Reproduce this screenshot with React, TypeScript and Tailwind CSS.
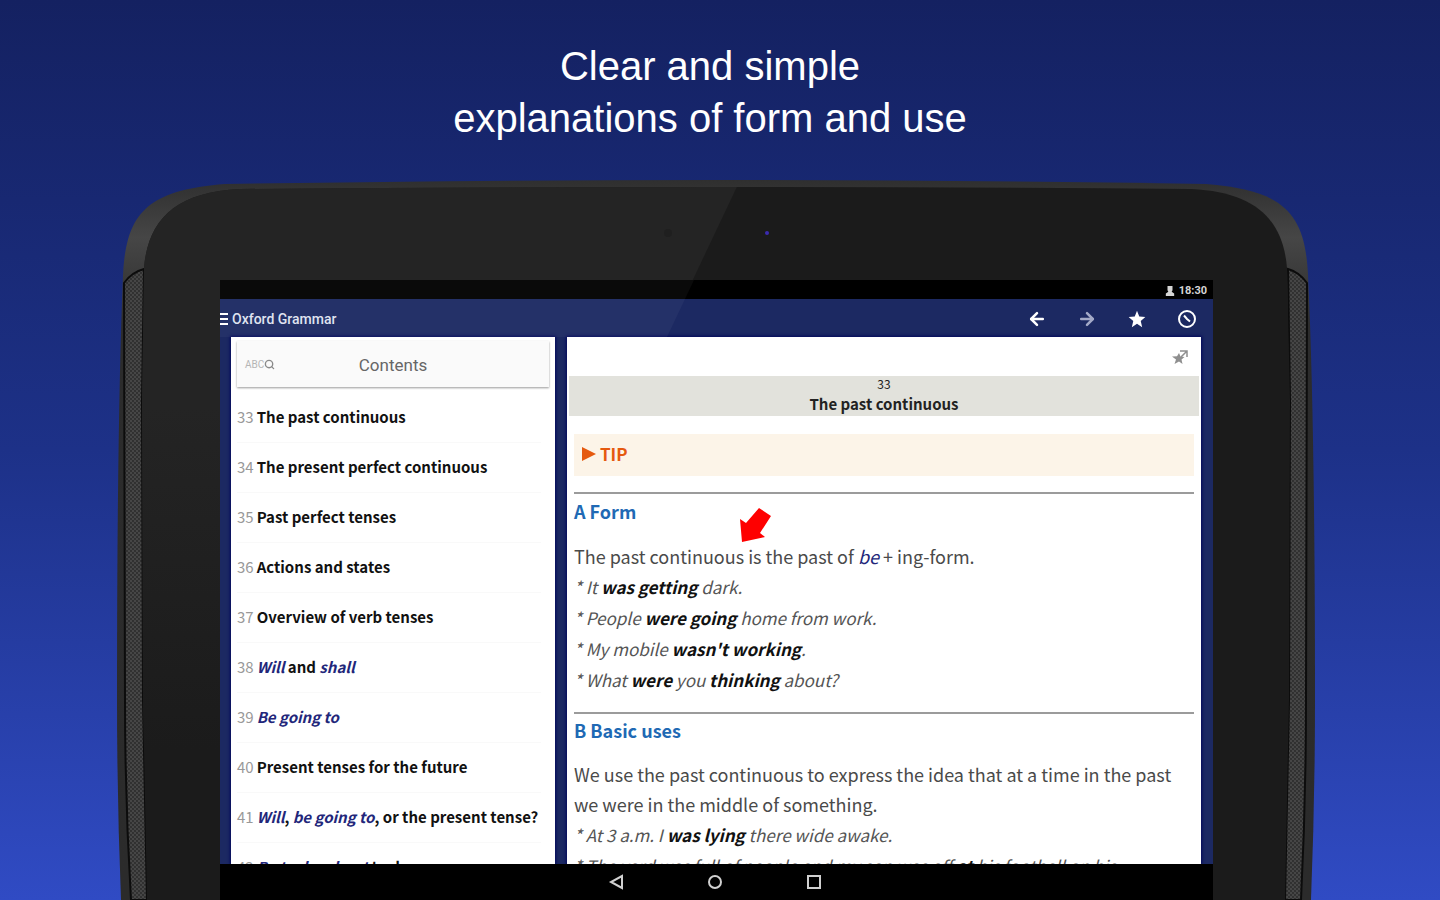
import { ReactNode } from "react";
import { ArrowLeft, ArrowRight, Search } from "lucide-react";

const Term = ({ children }: { children: ReactNode }) => (
  <em className="text-[#22267a]">{children}</em>
);

const units: { no: number; title: ReactNode }[] = [
  { no: 33, title: "The past continuous" },
  { no: 34, title: "The present perfect continuous" },
  { no: 35, title: "Past perfect tenses" },
  { no: 36, title: "Actions and states" },
  { no: 37, title: "Overview of verb tenses" },
  { no: 38, title: <><Term>Will</Term> and <Term>shall</Term></> },
  { no: 39, title: <Term>Be going to</Term> },
  { no: 40, title: "Present tenses for the future" },
  { no: 41, title: <><Term>Will</Term>, <Term>be going to</Term>, or the present tense?</> },
  { no: 42, title: <><Term>Be to, be about</Term> to do</> },
];

function TabletFrame() {
  return (
    <svg
      className="absolute inset-0 w-full h-full"
      viewBox="116 178 1200 722"
      preserveAspectRatio="none"
      aria-hidden="true"
    >
      <defs>
        <linearGradient id="rim" x1="0" y1="0" x2="0" y2="1">
          <stop offset="0" stopColor="#2f2f2f" />
          <stop offset="0.08" stopColor="#464646" />
          <stop offset="0.2" stopColor="#2c2c2c" />
          <stop offset="1" stopColor="#2b2b2b" />
        </linearGradient>
        <linearGradient id="gloss" x1="0" y1="0" x2="0" y2="1">
          <stop offset="0.4" stopColor="#242424" />
          <stop offset="1" stopColor="#1b1b1b" />
        </linearGradient>
        <pattern id="mesh" width="4" height="4" patternUnits="userSpaceOnUse">
          <rect width="4" height="4" fill="#464646" />
          <circle cx="1" cy="1" r="0.9" fill="#262626" />
          <circle cx="3" cy="3" r="0.9" fill="#262626" />
        </pattern>
        <clipPath id="face">
          <path d="M147 900 L143 700 L142 400 L144 268 C148 220 175 192 240 189 Q480 187 716 187 T1191 189 C1256 192 1283 220 1287 268 L1290 400 L1289 700 L1285 900Z" />
        </clipPath>
      </defs>
      <path
        d="M121 900 Q117 800 117 700 Q117 420 123 275 C126 215 145 190 225 184 Q480 180 716 180 T1206 184 C1286 190 1305 215 1308 275 Q1315 420 1315 700 Q1315 800 1311 900Z"
        fill="url(#rim)"
      />
      <path d="M131 900 Q125 800 125 700 L124 283 Q132 272 144 269 L142 400 L143 700 L147 900Z" fill="url(#mesh)" stroke="#0c0c0c" strokeWidth="2" />
      <path d="M1301 900 Q1306 800 1306 700 L1307 283 Q1299 272 1288 269 L1290 400 L1289 700 L1285 900Z" fill="url(#mesh)" stroke="#0c0c0c" strokeWidth="2" />
      <g clipPath="url(#face)">
        <rect x="116" y="178" width="1200" height="722" fill="#1b1b1b" />
        <path d="M116 178 H741 L470 750 H116Z" fill="url(#gloss)" />
      </g>
      <circle cx="668" cy="233" r="4" fill="#1f1f1f" />
      <circle cx="767" cy="233" r="2" fill="#3a2bb0" />
    </svg>
  );
}

function AppBar() {
  return (
    <header className="h-[38px] pt-[2px] shrink-0 flex items-center justify-between text-white">
      <div className="flex items-center gap-1">
        <button aria-label="Menu" className="w-2 flex flex-col gap-[3px]">
          <span className="h-[2px] bg-white"></span>
          <span className="h-[2px] bg-white"></span>
          <span className="h-[2px] bg-white"></span>
        </button>
        <h1 className="text-sm font-medium text-[#dfe2f0]">Oxford Grammar</h1>
      </div>
      <div className="flex items-center gap-[30px] pr-4">
        <button aria-label="Back"><ArrowLeft size={20} strokeWidth={3} /></button>
        <button aria-label="Forward" className="text-[#a4aac8]"><ArrowRight size={20} strokeWidth={3} /></button>
        <button aria-label="Favourites">
          <svg width="20" height="20" viewBox="0 0 24 24" fill="currentColor">
            <path d="M12 17.800L18.200 22l-1.700-7.500L22 9.600 14.700 9 12 2 9.300 9 2 9.600l5.500 4.900L5.800 22z" />
          </svg>
        </button>
        <button aria-label="History">
          <svg width="20" height="20" viewBox="0 0 20 20" fill="none" stroke="currentColor" strokeWidth="2">
            <circle cx="10" cy="10" r="8" />
            <path d="M7 6.500L10 10l3 2.500" />
          </svg>
        </button>
      </div>
    </header>
  );
}

function Contents() {
  return (
    <nav className="w-[324px] shrink-0 bg-white px-[6px] pt-1 overflow-hidden shadow-[0_0_3px_1px_#02075c]">
      <div className="h-[46px] bg-[#fafafa] shadow-[0_1px_2px_#9a9a9a] grid grid-cols-[1fr_auto_1fr] items-center">
        <button aria-label="Search" className="flex items-center pl-2 text-[10px] text-[#b5b5b5]">
          ABC<Search size={11} strokeWidth={3} className="text-[#8a8a8a]" />
        </button>
        <h2 className="pt-1 text-[17px] text-[#666]">Contents</h2>
      </div>
      <ul className="mt-[6px] pr-2 font-['Noto_Sans_CJK_SC',sans-serif] text-[15px]">
        {units.map(({ no, title }) => (
          <li key={no} className="h-[50px] border-b border-[#f9f9f9]">
            <a href={`#unit-${no}`} className="h-full flex items-center gap-[3px] whitespace-nowrap">
              <span className="text-[#999]">{no}</span>
              <span className="font-bold text-[#111]">{title}</span>
            </a>
          </li>
        ))}
      </ul>
    </nav>
  );
}

function Examples({ children }: { children: ReactNode }) {
  return (
    <ul className="italic text-[17px] leading-[31px] text-[#555] whitespace-nowrap [&_b]:text-[#111]">{children}</ul>
  );
}

function Lesson() {
  return (
    <main className="flex-1 min-w-0 bg-white overflow-hidden shadow-[0_0_3px_1px_#02075c] font-['Noto_Sans_CJK_SC',sans-serif] text-lg">
      <div className="h-[39px] flex items-center justify-end pr-3">
        <button aria-label="Add to favourites" className="text-[#8f8f8f]">
          <svg width="18" height="18" viewBox="0 0 18 18" fill="currentColor">
            <path d="M8 5l1.500 3.500 4 .5-3 2.500 1 4.500L8 13.500 3.500 16l1.500-4.500L1 8.500l5-.3z" />
            <path d="M9 3h7v6M15.500 3.500L10 9" fill="none" stroke="currentColor" strokeWidth="1.500" />
          </svg>
        </button>
      </div>
      <div className="h-10 mx-[2px] bg-[#e2e2dc] text-center text-[#222]">
        <div className="text-xs leading-4">33</div>
        <h2 className="text-[15px] leading-6 font-bold">The past continuous</h2>
      </div>
      <div className="px-[7px]">
        <button className="mt-[18px] w-full h-[42px] bg-[#fcf4e8] pl-2 pb-[2px] flex items-center gap-1 text-[17px] font-bold text-[#e5590f]">
          <svg width="14" height="14" viewBox="0 0 14 14" fill="currentColor"><path d="M0 0L14 7 0 14z" /></svg>
          TIP
        </button>
        <hr className="mt-4 border-t-2 border-[#9b9b9b]" />
        <section className="relative text-[#4a4a4a]">
          <h3 className="leading-[34px] font-bold text-[#2069b4]">A Form</h3>
          <svg className="absolute left-[165px] top-[13px]" width="32" height="36" viewBox="0 0 32 36" fill="#fe0000">
            <path d="M20 1L32 9 21 26 26 30 3 35 1 12 7 16z" />
          </svg>
          <p className="mt-[13px] leading-[30px]">The past continuous is the past of <Term>be</Term> + ing-form.</p>
          <Examples>
            <li>* It <b>was getting</b> dark.</li>
            <li>* People <b>were going</b> home from work.</li>
            <li>* My mobile <b>wasn't working</b>.</li>
            <li>* What <b>were</b> you <b>thinking</b> about?</li>
          </Examples>
        </section>
        <hr className="mt-[17px] border-t-2 border-[#9b9b9b]" />
        <section className="text-[#4a4a4a]">
          <h3 className="leading-[32px] font-bold text-[#2069b4]">B Basic uses</h3>
          <p className="mt-[13px] leading-[30px]">We use the past continuous to express the idea that at a time in the past we were in the middle of something.</p>
          <Examples>
            <li>* At 3 a.m. I <b>was lying</b> there wide awake.</li>
            <li>* The yard was full of people and my son was off <b>at</b> his football on his</li>
          </Examples>
        </section>
      </div>
    </main>
  );
}

function SystemBar() {
  return (
    <footer className="h-9 pr-1 shrink-0 bg-black flex items-center justify-center gap-[83px] text-[#d0d0d0]">
      <button aria-label="Back">
        <svg width="16" height="16" viewBox="0 0 16 16" fill="none" stroke="currentColor" strokeWidth="2"><path d="M14 2v12L3 8z" /></svg>
      </button>
      <button aria-label="Home">
        <svg width="16" height="16" viewBox="0 0 16 16" fill="none" stroke="currentColor" strokeWidth="2"><circle cx="8" cy="8" r="6" /></svg>
      </button>
      <button aria-label="Recent apps">
        <svg width="16" height="16" viewBox="0 0 16 16" fill="none" stroke="currentColor" strokeWidth="2"><rect x="2" y="2" width="12" height="12" /></svg>
      </button>
    </footer>
  );
}

export default function App() {
  return (
    <div className="h-screen flex flex-col pr-2 overflow-hidden bg-linear-to-b from-[#142161] via-[#1d3188] to-[#304bc4] font-[Roboto,sans-serif]">
      <p className="pt-10 pb-[34px] pr-3 text-center text-[40px] leading-[52px] text-white font-['Liberation_Sans',Arial,sans-serif]">
        Clear and simple
        <br />
        explanations of form and use
      </p>
      <div className="relative flex-1 min-h-0 w-full max-w-[1200px] mx-auto flex flex-col pt-[102px] pl-[104px] pr-[103px]">
        <TabletFrame />
        <div className="relative flex-1 min-h-0 flex flex-col bg-[#1c2962]">
          <div className="h-[19px] pt-[3px] shrink-0 bg-black flex items-center justify-end gap-1 pr-[6px] text-[11px] font-bold text-[#d5d5d5]">
            <svg width="10" height="10" viewBox="0 0 10 12" fill="currentColor"><path d="M2 0h6v5L7 7l3 2v3H0V9l3-2-1-2z" /></svg>
            18:30
          </div>
          <AppBar />
          <div className="flex-1 min-h-0 flex gap-3 pl-[11px] pr-3">
            <Contents />
            <Lesson />
          </div>
          <SystemBar />
          <svg className="absolute left-0 top-0 pointer-events-none" width="474" height="57" viewBox="0 0 474 57" aria-hidden="true">
            <path d="M0 0H474L447 57H0z" fill="#fff" fillOpacity="0.04" />
          </svg>
        </div>
      </div>
    </div>
  );
}
